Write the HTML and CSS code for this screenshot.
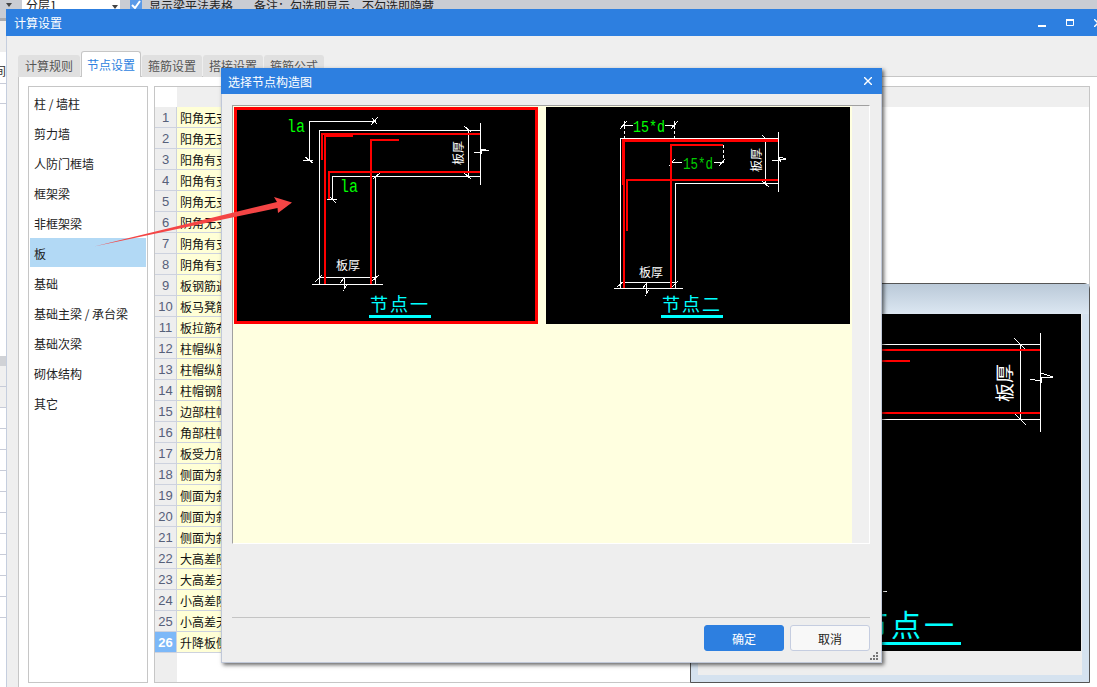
FILE: index.html
```html
<!DOCTYPE html>
<html lang="zh-CN">
<head>
  <meta charset="utf-8">
  <title>选择节点构造图</title>
  <link rel="stylesheet" href="styles.css">
</head>
<body>
  <!-- app behind the windows -->
  <div class="toolbar">
    <span class="tool-arrow tool-arrow-left"></span>
    <div class="tool-select">分层1<span class="tool-arrow"></span></div>
    <span class="tool-check">
      <svg viewBox="0 0 12 12" width="12" height="12"><path d="M2 6l3 3 5-7" fill="none" stroke="#fff" stroke-width="2"/></svg>
    </span>
    <span class="tool-label">显示梁平法表格</span>
    <span class="tool-note">备注：勾选即显示，不勾选即隐藏</span>
  </div>
  <div class="sheet">
    <div class="sheet-head"></div>
    <div class="sheet-blank">间</div>
    <div class="sheet-line"></div>
    <div class="sheet-gap"></div>
    <div class="sheet-band"></div>
    <div class="sheet-row sheet-row-grey"></div>
    <div class="sheet-row sheet-row-grey"></div>
    <div class="sheet-row"></div>
    <div class="sheet-row"></div>
    <div class="sheet-row"></div>
    <div class="sheet-row"></div>
    <div class="sheet-row"></div>
    <div class="sheet-row"></div>
    <div class="sheet-row"></div>
    <div class="sheet-row"></div>
    <div class="sheet-row"></div>
    <div class="sheet-row"></div>
  </div>

  <!-- 计算设置 -->
  <section class="window settings">
    <header class="titlebar">
      <span>计算设置</span>
      <div class="win-buttons">
        <svg viewBox="0 0 8 8" width="8" height="8"><rect y="6" width="8" height="2" fill="#fff"/></svg>
        <svg viewBox="0 0 8 7" width="8" height="7"><path d="M.5 1.5h7v5h-7z" fill="none" stroke="#fff"/><rect width="8" height="2" fill="#fff"/></svg>
        <svg class="win-close" viewBox="0 0 8 8" width="8" height="8"><path d="M0 0l8 8M8 0l-8 8" stroke="#fff" stroke-width="1.5"/></svg>
      </div>
    </header>
    <div class="settings-body">
      <nav class="tabs">
        <a class="tab">计算规则</a>
        <a class="tab tab-active">节点设置</a>
        <a class="tab">箍筋设置</a>
        <a class="tab">搭接设置</a>
        <a class="tab">箍筋公式</a>
      </nav>
      <div class="panel">
        <ul class="types">
          <li>柱 / 墙柱</li>
          <li>剪力墙</li>
          <li>人防门框墙</li>
          <li>框架梁</li>
          <li>非框架梁</li>
          <li class="type-active">板</li>
          <li>基础</li>
          <li>基础主梁 / 承台梁</li>
          <li>基础次梁</li>
          <li>砌体结构</li>
          <li>其它</li>
        </ul>
        <div class="grid">
          <div class="grid-head"><div class="grid-head-cell"></div></div>
          <div class="row"><span class="num">1</span><span class="name">阳角无支座</span></div>
          <div class="row"><span class="num">2</span><span class="name">阳角无支座</span></div>
          <div class="row"><span class="num">3</span><span class="name">阳角有支座</span></div>
          <div class="row"><span class="num">4</span><span class="name">阳角有支座</span></div>
          <div class="row"><span class="num">5</span><span class="name">阴角无支座</span></div>
          <div class="row"><span class="num">6</span><span class="name">阴角无支座</span></div>
          <div class="row"><span class="num">7</span><span class="name">阴角有支座</span></div>
          <div class="row"><span class="num">8</span><span class="name">阴角有支座</span></div>
          <div class="row"><span class="num">9</span><span class="name">板钢筋遇</span></div>
          <div class="row"><span class="num">10</span><span class="name">板马凳筋</span></div>
          <div class="row"><span class="num">11</span><span class="name">板拉筋布</span></div>
          <div class="row"><span class="num">12</span><span class="name">柱帽纵筋</span></div>
          <div class="row"><span class="num">13</span><span class="name">柱帽纵筋</span></div>
          <div class="row"><span class="num">14</span><span class="name">柱帽钢筋</span></div>
          <div class="row"><span class="num">15</span><span class="name">边部柱帽</span></div>
          <div class="row"><span class="num">16</span><span class="name">角部柱帽</span></div>
          <div class="row"><span class="num">17</span><span class="name">板受力筋</span></div>
          <div class="row"><span class="num">18</span><span class="name">侧面为斜</span></div>
          <div class="row"><span class="num">19</span><span class="name">侧面为斜</span></div>
          <div class="row"><span class="num">20</span><span class="name">侧面为斜</span></div>
          <div class="row"><span class="num">21</span><span class="name">侧面为斜</span></div>
          <div class="row"><span class="num">22</span><span class="name">大高差阶</span></div>
          <div class="row"><span class="num">23</span><span class="name">大高差无</span></div>
          <div class="row"><span class="num">24</span><span class="name">小高差阶</span></div>
          <div class="row"><span class="num">25</span><span class="name">小高差无</span></div>
          <div class="row row-active"><span class="num">26</span><span class="name">升降板侧</span></div>
          <div class="grid-rest"><div class="grid-rest-num"></div></div>
        </div>
      </div>
    </div>
  </section>

  <!-- large preview behind the dialog -->
  <section class="window preview">
    <div class="preview-title"></div>
    <div class="preview-body">
      <svg class="cad" viewBox="698 314 383 337" width="383" height="337">
        <g class="wire">
          <path d="M698 344.5H1040M698 419.5H1040M1040.5 333V432M1020.5 344V419"/>
          <path d="M1014 338l12 12M1014 413l12 12M1030 379l10 2 1-8 12 4h-12v6"/>
          <path d="M883 591h4"/>
        </g>
        <g class="rebar">
          <rect x="698" y="349" width="342" height="2"/>
          <rect x="698" y="360" width="212" height="2"/>
          <rect x="698" y="412" width="342" height="2"/>
          <rect x="848" y="642" width="113" height="3" class="cyan"/>
        </g>
        <text class="cad-white" font-size="19" transform="translate(1012 402) rotate(-90)">板厚</text>
        <text class="cad-cyan" font-size="30" letter-spacing="3" x="858" y="636">节点一</text>
      </svg>
    </div>
  </section>

  <!-- 选择节点构造图 -->
  <section class="window dialog">
    <header class="titlebar dialog-title">
      <span>选择节点构造图</span>
      <svg viewBox="0 0 8 8" width="8" height="8"><path d="M0 0l8 8M8 0l-8 8" stroke="#fff" stroke-width="1.4"/></svg>
    </header>
    <div class="dialog-body">
      <div class="nodes">
        <div class="nodes-area">
          <div class="node node-active">
            <svg class="cad" viewBox="237 110 298 211" width="298" height="211">
              <g class="wire">
                <path d="M374 121.5H309.5V161M303 160.5H313M305 157l8 6M371 125l7-8M372 118l5 6"/>
                <path d="M480 130.5H319.5V284M480 176.5H332.5V200M375.5 176V284"/>
                <path d="M312 284.5H383M319 277.5H376M480.5 123V185M468.5 130V176"/>
                <path d="M464 126l7 6M464 173l7 6M373 179l7-6M327 199h10M329 196l7 7"/>
                <path d="M315 282l7-7M371 282l8-7M340 283l4-5V289l3-4M474 152l6 1 1-4 8 1.5h-8v3"/>
              </g>
              <g class="rebar">
                <rect x="321" y="133" width="159" height="2"/>
                <rect x="321" y="133" width="2" height="27"/>
                <rect x="325" y="134" width="28" height="3"/>
                <rect x="324" y="135" width="2" height="149"/>
                <rect x="371" y="139" width="28" height="2"/>
                <rect x="370" y="139" width="2" height="145"/>
                <rect x="329" y="171" width="151" height="2"/>
                <rect x="328" y="171" width="2" height="28"/>
              </g>
              <text class="cad-green" font-size="18" x="287" y="132" textLength="18" lengthAdjust="spacingAndGlyphs">la</text>
              <text class="cad-green" font-size="18" x="340" y="192" textLength="18" lengthAdjust="spacingAndGlyphs">la</text>
              <text class="cad-white" font-size="12" x="336" y="270">板厚</text>
              <text class="cad-white" font-size="12" transform="translate(463 165) rotate(-90)">板厚</text>
              <text class="cad-cyan" font-size="18" letter-spacing="2" x="370" y="311">节点一</text>
              <rect class="cyan" x="369" y="315" width="62" height="3"/>
            </svg>
          </div>
          <div class="node">
            <svg class="cad" viewBox="546 107 304 217" width="304" height="217">
              <g class="wire">
                <path d="M778 138.5H620.5V288M778 183.5H675.5V288M614 288.5H683M620 282.5H676"/>
                <path d="M778.5 132V192M765.5 138V183M762 135l7 7M762 181l7 6"/>
                <path d="M624 125.5h9M665 125.5h9M620 129l7-8M671 129l7-8"/>
                <path d="M671 162h11M714 162h10M669 166l6-7M719 166l6-7"/>
                <path d="M617 287l6-5M672 287l6-6M643 288l3-4V294l3-4M772 160l7 1 1-4 6 2h-6v3"/>
              </g>
              <g class="wire dashed">
                <path d="M624.5 121V139M674.5 121V139M723.5 145V162"/>
              </g>
              <g class="rebar">
                <rect x="622" y="139" width="156" height="3"/>
                <rect x="622" y="140" width="3" height="45"/>
                <rect x="623" y="185" width="2" height="103"/>
                <rect x="626" y="180" width="2" height="51"/>
                <rect x="626" y="179" width="152" height="2"/>
                <rect x="671" y="144" width="52" height="2"/>
                <rect x="670" y="144" width="2" height="144"/>
              </g>
              <text class="cad-green" font-size="17" x="633" y="132" textLength="32" lengthAdjust="spacingAndGlyphs">15*d</text>
              <text class="cad-green-dim" font-size="17" x="683" y="169" textLength="30" lengthAdjust="spacingAndGlyphs">15*d</text>
              <text class="cad-white" font-size="12" x="639" y="277">板厚</text>
              <text class="cad-white" font-size="12" transform="translate(761 172) rotate(-90)">板厚</text>
              <text class="cad-cyan" font-size="18" letter-spacing="2" x="662" y="311">节点二</text>
              <rect class="cyan" x="661" y="315" width="62" height="3"/>
            </svg>
          </div>
        </div>
        <div class="nodes-side"></div>
      </div>
      <div class="dialog-spacer"></div>
      <footer class="dialog-foot">
        <button class="btn btn-primary">确定</button>
        <button class="btn">取消</button>
      </footer>
      <svg class="grip" viewBox="0 0 8 8" width="8" height="8">
        <path d="M6 0h2v2H6zM3 3h2v2H3zM6 3h2v2H6zM0 6h2v2H0zM3 6h2v2H3zM6 6h2v2H6z" fill="#777"/>
      </svg>
    </div>
  </section>

  <!-- annotation drawn over the shot -->
  <svg class="callout" viewBox="0 0 1097 687" width="1097" height="687">
    <polygon points="94,246.5 277,202 274,197 292,202.5 278,213 277.5,208" fill="#f44545"/>
  </svg>
</body>
</html>
```

FILE: styles.css
```css
html,
body {
  margin: 0;
  height: 100%;
}
body {
  position: relative;
  overflow: hidden;
  background: #fff;
  font-family: "Noto Sans CJK SC", "Liberation Sans", sans-serif;
  font-size: 12px;
  color: #222;
}

/* toolbar and sheet behind the windows */
.toolbar {
  display: flex;
  align-items: flex-start;
  height: 9px;
  overflow: hidden;
  background: #c9ccd3;
  line-height: 14px;
}
.tool-select {
  display: flex;
  justify-content: space-between;
  box-sizing: border-box;
  width: 98px;
  height: 14px;
  margin: -1px 10px 0 10px;
  padding: 0 2px 0 4px;
  background: #fff;
  line-height: 12px;
}
.tool-arrow {
  width: 0;
  height: 0;
  margin-top: 6px;
  border: 3px solid transparent;
  border-top: 4px solid #444;
  border-bottom: 0;
}
.tool-arrow-left {
  margin: 3px 0 0 6px;
}
.tool-check {
  width: 12px;
  height: 12px;
  margin: -1px 7px 0 0;
  background: #5b9ae8;
}
.tool-label {
  margin: -1px 21px 0 0;
}
.tool-note {
  margin-top: -1px;
}

.sheet {
  width: 6px;
  overflow: hidden;
  line-height: 14px;
}
.sheet-head {
  height: 9px;
  background: #c9ccd3;
  border-bottom: 3px solid #a9abb0;
}
.sheet-blank {
  height: 62px;
  background: linear-gradient(#eee 31px, #fff 31px);
  line-height: 100px;
  color: #333;
  text-indent: -6px;
}
.sheet-line {
  height: 19px;
  border-top: 1px solid #c8ccd8;
  border-bottom: 1px solid #c8ccd8;
}
.sheet-gap {
  height: 252px;
}
.sheet-band {
  height: 10px;
  background: #d0d2d6;
}
.sheet-row {
  height: 20px;
  border-bottom: 1px solid #c8ccd8;
}
.sheet-row-grey {
  background: #f0f0f0;
}

/* windows are free on the desktop */
.window {
  position: absolute;
  box-sizing: border-box;
}
.titlebar {
  display: flex;
  align-items: center;
  justify-content: space-between;
  flex: none;
  height: 27px;
  padding-left: 8px;
  background: #2d7fe0;
  color: #fff;
}

.settings {
  left: 6px;
  top: 9px;
  width: 1110px;
  height: 690px;
  display: flex;
  flex-direction: column;
}
.win-buttons {
  display: flex;
  align-items: flex-start;
  gap: 20px;
  margin-right: 14px;
}
.settings-body {
  flex: 1;
  display: flex;
  flex-direction: column;
  padding: 15px 0 0 11px;
  background: #efefef;
  border-left: 1px solid #c5cede;
}
.tabs {
  position: relative;
  display: flex;
  align-items: flex-end;
  height: 26px;
  margin-bottom: -1px;
}
.tab {
  box-sizing: border-box;
  width: 60px;
  height: 22px;
  margin-right: 1px;
  border-radius: 3px 3px 0 0;
  background: #e0e0e0;
  text-align: center;
  line-height: 22px;
  color: #555;
}
.tab:first-child {
  width: 62px;
}
.tab-active {
  height: 26px;
  border: 1px solid #c6c6c6;
  border-bottom: 0;
  background: #fff;
  line-height: 25px;
  color: #2d7fe0;
}
.panel {
  flex: 1;
  display: flex;
  gap: 6px;
  padding: 9px 0 0 9px;
  background: #fff;
  border-top: 1px solid #c6c6c6;
  border-left: 1px solid #c6c6c6;
}

.types {
  box-sizing: border-box;
  width: 120px;
  height: 597px;
  margin: 0;
  padding: 1px;
  list-style: none;
  border: 1px solid #c6c6c6;
}
.types li {
  height: 29px;
  margin-bottom: 1px;
  padding-left: 4px;
  line-height: 31px;
}
.types .type-active {
  background: #b2d9f5;
}

.grid {
  box-sizing: border-box;
  display: flex;
  flex-direction: column;
  width: 936px;
  height: 597px;
  border: 1px solid #c6c6c6;
}
.grid-head {
  flex: none;
  height: 20px;
  padding-left: 22px;
}
.grid-head-cell {
  height: 100%;
  background: #efefef;
}
.row {
  flex: none;
  display: flex;
  height: 21px;
  line-height: 22px;
}
.num {
  flex: none;
  box-sizing: border-box;
  width: 22px;
  background: #eee;
  border-right: 1px solid #cdd2de;
  border-bottom: 1px solid #cdd2de;
  text-align: center;
  font-family: "Liberation Sans", sans-serif;
  font-size: 13px;
  color: #56607a;
}
.name {
  flex: none;
  box-sizing: border-box;
  width: 100px;
  padding-left: 3px;
  border-bottom: 1px solid #cdd2de;
  background: #ffffd6;
  color: #111;
}
.row-active .num {
  background: #7cb8f8;
  font-weight: bold;
  color: #fff;
}
.grid-rest {
  flex: 1;
}
.grid-rest-num {
  width: 22px;
  height: 100%;
  background: #eee;
}

/* preview behind the dialog */
.preview {
  left: 690px;
  top: 283px;
  width: 400px;
  height: 400px;
  padding: 0 7px 7px;
  background: #d5e2ef;
  border: 1px solid #555;
  border-top-right-radius: 6px;
}
.preview-title {
  height: 30px;
  margin: 0 -7px;
  background: linear-gradient(#bac9d8, #dce7f2);
}
.preview-body {
  height: 361px;
  background: #eee;
}

/* select dialog */
.dialog {
  left: 221px;
  top: 68px;
  width: 661px;
  height: 595px;
  display: flex;
  flex-direction: column;
  background: #eee;
  box-shadow: 2px 2px 4px rgba(0, 0, 0, .6);
}
.dialog-title {
  height: 26px;
  padding: 0 10px 0 7px;
}
.dialog-body {
  position: relative;
  flex: 1;
  display: flex;
  flex-direction: column;
  padding: 11px 11px 11px 10px;
  border: 1px solid #c0c8d8;
  border-top: 0;
}
.nodes {
  flex: none;
  display: flex;
  box-sizing: border-box;
  height: 439px;
  border-top: 1px solid #a0a0a0;
  border-left: 1px solid #a0a0a0;
  border-right: 1px solid #fff;
  border-bottom: 1px solid #fff;
  background: #f0f0f0;
}
.nodes-area {
  flex: 1;
  display: flex;
  align-items: flex-start;
  gap: 8px;
  padding: 1px;
  background: #ffffe0;
}
.nodes-side {
  flex: none;
  width: 17px;
}
.node {
  line-height: 0;
  background: #000;
}
.node-active {
  border: 3px solid #f00;
}
.dialog-spacer {
  flex: 1;
  border-bottom: 1px solid #c4c4c4;
}
.dialog-foot {
  display: flex;
  justify-content: flex-end;
  gap: 6px;
  padding-top: 7px;
}
.btn {
  box-sizing: border-box;
  width: 80px;
  height: 26px;
  padding: 0;
  border: 1px solid #c5cde0;
  border-radius: 3px;
  background: #f8f8f8;
  font: inherit;
  color: #222;
}
.btn-primary {
  border-color: #2d7fe0;
  background: #2d7fe0;
  color: #fff;
}
.grip {
  position: absolute;
  right: 3px;
  bottom: 2px;
}

/* CAD drawings */
.cad {
  display: block;
  background: #000;
}
.wire {
  fill: none;
  stroke: #fff;
  stroke-width: 1;
  shape-rendering: crispEdges;
}
.dashed {
  stroke-dasharray: 3 2;
}
.rebar rect {
  fill: #f00;
}
.rebar .cyan,
.cyan {
  fill: #0ff;
}
.cad-green {
  fill: #0f0;
  font-family: "Liberation Mono", monospace;
}
.cad-green-dim {
  fill: #0c0;
  font-family: "Liberation Mono", monospace;
}
.cad-white {
  fill: #fff;
}
.cad-cyan {
  fill: #0ff;
}

.callout {
  position: absolute;
  left: 0;
  top: 0;
  pointer-events: none;
}
```
